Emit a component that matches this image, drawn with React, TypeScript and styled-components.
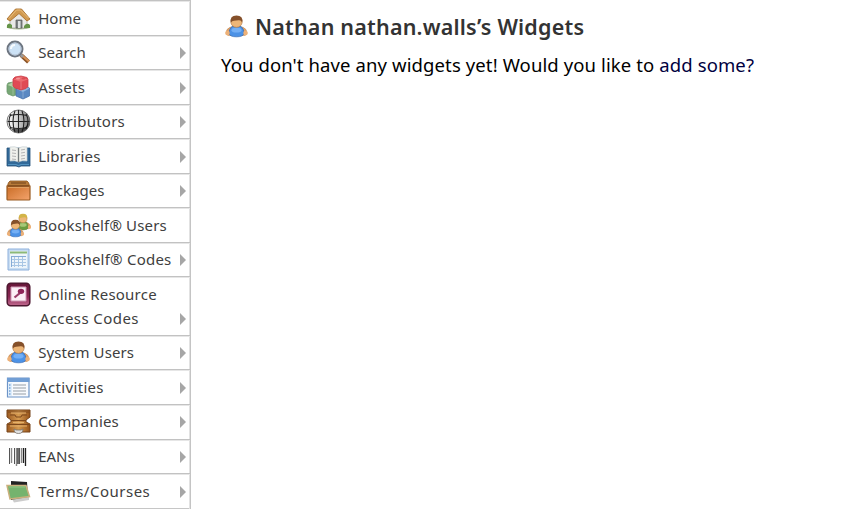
import React from "react";
import styled, { createGlobalStyle } from "styled-components";

const GlobalStyle = createGlobalStyle`
  * { box-sizing: border-box; }
  html, body { margin: 0; background: #fff; }
  body { font-family: "Noto Sans", "Open Sans", sans-serif; overflow: hidden; }
`;

const Page = styled.div`
  display: flex;
  height: 526px;
  background: #fff;
`;

const Sidebar = styled.nav`
  width: 191px;
  flex: none;
`;

const MenuList = styled.ul`
  list-style: none;
  margin: 0;
  padding: 0 0 1px;
  border-right: 1px solid #c4c4c4;
  box-shadow: inset -1px 0 0 #e2e2e2;
  background: linear-gradient(#c6c6c6, #c6c6c6) bottom / 100% 1px no-repeat;
`;

const MenuItem = styled.li<{ $tall?: boolean }>`
  display: flex;
  align-items: flex-start;
  height: ${(p) => (p.$tall ? 58.5 : 34.56)}px;
  padding: 4.5px 4.5px 0 6px;
  border-top: 1px solid #c2c2c2;
  box-shadow: inset 0 1px 0 #e6e6e6;
`;

const IconSlot = styled.span`
  display: block;
  width: 25px;
  height: 25px;
  flex: none;
  svg { display: block; width: 25px; height: 25px; }
`;

const Labels = styled.span`
  display: flex;
  flex-direction: column;
  flex: 1;
  padding-left: 7.2px;
`;

const Label = styled.span<{ $track: number; $indent?: boolean }>`
  font-size: 15px;
  line-height: 24px;
  color: #404040;
  white-space: nowrap;
  letter-spacing: ${(p) => p.$track}px;
  padding-left: ${(p) => (p.$indent ? 1.5 : 0)}px;
`;

const Arrow = styled.span<{ $low?: boolean }>`
  width: 0;
  height: 0;
  flex: none;
  margin-top: ${(p) => (p.$low ? 31 : 7)}px;
  border-left: 6px solid #a6a6a6;
  border-top: 6px solid transparent;
  border-bottom: 6px solid transparent;
`;

const Main = styled.main`
  flex: 1;
  padding: 12px 0 0 30px;
`;

const Heading = styled.h1`
  display: flex;
  align-items: center;
  margin: 0;
  height: 29px;
  padding-left: 3px;
  font-size: 21.5px;
  line-height: 28px;
  font-weight: 600;
  color: #333;
  white-space: nowrap;
`;

const HeadingText = styled.span`
  padding-left: 6px;
  letter-spacing: 0.2px;
`;

const Message = styled.p`
  margin: 10px 0 0;
  font-size: 18.5px;
  line-height: 28px;
  color: #000;
  white-space: nowrap;
  letter-spacing: 0.11px;
`;

const Link = styled.a`
  color: #000040;
  text-decoration: none;
`;

const Svg = ({ children }: { children: React.ReactNode }) => (
  <svg viewBox="0 0 25 25" aria-hidden="true">{children}</svg>
);

const HomeIcon = () => (
  <Svg>
    <ellipse cx="12.5" cy="21" rx="12" ry="2.5" fill="#a9bd90" />
    <path d="M4 12L13 5l8 7v10H4z" fill="#e9e9e7" stroke="#a9a9a5" strokeWidth=".8" />
    <path d="M1 13L9.5 3h6L24 13l-3 2-8-7.5L4 15z" fill="#d19a50" stroke="#a96f2c" strokeWidth=".9" />
    <path d="M3 12.5l7.5-8.500h4l8 8" fill="none" stroke="#e9bd7d" strokeWidth="1" />
    <path d="M10 14h6v8h-6z" fill="#7f8585" stroke="#555" strokeWidth=".7" />
    <path d="M12 15h2.500v7H12z" fill="#dde0e0" />
    <path d="M1 19q2-3 5 0v3H1zM18 20q3-4 6-1v3h-6z" fill="#669549" />
  </Svg>
);

const SearchIcon = () => (
  <Svg>
    <path d="M15 15l7.500 7" stroke="#8a5428" strokeWidth="4.2" />
    <path d="M15 14.500l8 7" stroke="#d99457" strokeWidth="2" />
    <path d="M13 13l4 4" stroke="#9a9a9a" strokeWidth="3" />
    <circle cx="9" cy="9" r="7.5" fill="#cce2f6" stroke="#6d7580" strokeWidth="2" />
    <circle cx="9" cy="9" r="6" fill="none" stroke="#b6c3d4" strokeWidth="1" />
    <path d="M5 9c0-3 2-4 4-4" fill="none" stroke="#f6fbff" strokeWidth="2" />
  </Svg>
);

const AssetsIcon = () => (
  <Svg>
    <path d="M1 10l1-2 5-1 5 3v9l-5 2-5-2-1-2z" fill="#77a775" stroke="#6b976b" strokeWidth=".8" />
    <path d="M1.500 10l5.500 2 5-2-5-3z" fill="#b3d0a5" />
    <path d="M10 14l8-3 5.500 2v8l-6.500 3-7-3z" fill="#5a88c2" stroke="#4a74ac" strokeWidth=".8" />
    <path d="M10.500 14l6.500 3 6.500-3.500-5.500-2z" fill="#91b6df" />
    <path d="M7 4l2-2 6-1 6 1.500 1 2v7l-2 2-5 1.500-6-2-2-2z" fill="#e04a54" stroke="#cc4049" strokeWidth=".8" />
    <path d="M7.500 4.500l7.500 2.500 6.500-2.500-6.500-3z" fill="#ec6c70" />
    <ellipse cx="12" cy="3.500" rx="2" ry="1" fill="#f59698" />
    <ellipse cx="17.500" cy="3.500" rx="2" ry="1" fill="#d94c53" />
    <path d="M15 7v7M17 17v6M7 12v8" stroke="#fff" opacity=".25" />
  </Svg>
);

const GlobeIcon = () => (
  <Svg>
    <defs>
      <linearGradient id="globe"><stop stopColor="#fafafa" /><stop offset=".45" stopColor="#d8d8d8" /><stop offset="1" stopColor="#777" /></linearGradient>
    </defs>
    <circle cx="12.5" cy="12.5" r="11.5" fill="url(#globe)" stroke="#555" strokeWidth=".8" />
    <path d="M4 6.500q8-2 17 0M1.500 12.500h22M4 18.500q8 2 17 0" fill="none" stroke="#222" strokeWidth="1.2" />
    <path d="M12.500 1v23M9 2Q5 12 9 23M16 2q4 10 0 21M5 5Q1 12 5 20M20 5q4 7 0 15" fill="none" stroke="#222" strokeWidth="1.100" />
    <path d="M16 20q5-2 7-7-1 8-7 10-6 2-11-3z" fill="#111" opacity=".65" />
  </Svg>
);

const BookIcon = () => (
  <Svg>
    <path d="M1 4h23v18H15l-2 1-3-1H1z" fill="#326998" stroke="#245079" strokeWidth=".8" />
    <path d="M4 3q5-1 8.500 1Q16 2 21 3v14q-5-1-8.500 1Q9 16 4 17z" fill="#f0f1ed" stroke="#c5d0d4" strokeWidth=".7" />
    <path d="M12.500 4v14" stroke="#747b7c" strokeWidth="1.300" />
    <path d="M6 6l4 .5M6 9l4 .5M6 12l4 .5M6 15l4 .5M15 6l4-.7M15 9l4-.7M15 12l4-.7M15 15l4-.7" stroke="#b5b5b5" strokeWidth="1" />
    <path d="M2 20.500h8l2.500 1 2.500-1h8" fill="none" stroke="#5292c0" strokeWidth="1.200" />
  </Svg>
);

const PackageIcon = () => (
  <Svg>
    <defs><linearGradient id="box" x2="1" y2="1"><stop stopColor="#c96c25" /><stop offset="1" stopColor="#f4a46d" /></linearGradient></defs>
    <path d="M4 3h17q2 1 2.500 5h-22Q2 4 4 3z" fill="#b77a39" stroke="#89531f" strokeWidth=".8" />
    <path d="M1 8h23v13q0 1-1 1H2q-1 0-1-1z" fill="url(#box)" stroke="#9a5a20" strokeWidth="1.200" />
    <path d="M2 8h21M5 5h15" stroke="#70431c" strokeWidth="1.200" />
    <path d="M2 9.500h21" stroke="#dfa062" />
  </Svg>
);

const Person = ({ blond = false }: { blond?: boolean }) => (
  <>
    <path d="M2 20q0-5 4-6.500l6.500-1.500 6.500 1.500q4 1.500 4 6.500l-2 2H4z" fill="#e3a468" stroke="#b98250" strokeWidth=".5" />
    <path d="M5 20q0-5 3-7.500h9q3 2.500 3 7.500-1 3.500-7.500 3.500T5 20z" fill={blond ? "#6b9c40" : "#4c92e6"} stroke={blond ? "#58833a" : "#2d65b3"} strokeWidth=".7" />
    <ellipse cx="12.500" cy="16.500" rx="5" ry="2.500" fill={blond ? "#a6c877" : "#74aff5"} />
    <ellipse cx="12.500" cy="8" rx="5.600" ry="5.500" fill="#edb678" stroke="#b77a42" strokeWidth=".7" />
    <path d="M6.800 8.500Q5.500 1 12.500 1t5.700 7.500Q17 5.500 14.500 6L10 6.500Q8 6.500 6.800 8.500z" fill={blond ? "#d2b448" : "#85502a"} />
    <ellipse cx="3.500" cy="19.500" rx="2.300" ry="2.500" fill="#edb178" />
    <ellipse cx="21.500" cy="19.500" rx="2.300" ry="2.500" fill="#edb178" />
  </>
);

const UserIcon = () => <Svg><g transform="translate(0 .5) scale(1 .95)"><Person /></g></Svg>;

const UsersIcon = () => (
  <Svg>
    <g transform="translate(8 0) scale(.72)"><Person blond /></g>
    <g transform="translate(0 6) scale(.76)"><Person /></g>
  </Svg>
);

const TableIcon = () => (
  <Svg>
    <path d="M2 2h21v21H2z" fill="#c8ddf2" stroke="#8db0dc" strokeWidth="1" />
    <path d="M4 4h17v17H4z" fill="#eef5fb" />
    <path d="M4 4.500h17v2H4z" fill="#8cb978" />
    <path d="M5 9.500h15M5 12.500h15M5 15.500h15M5 18.500h15M8.500 9v11M12.500 9v11M16.500 9v11" stroke="#a9c6e4" strokeWidth="1" />
    <path d="M5 9.500h15M5.500 9v11" stroke="#86abd5" />
  </Svg>
);

const KeyIcon = () => (
  <Svg>
    <defs><linearGradient id="plum" x2="0" y2="1"><stop stopColor="#651638" /><stop offset=".6" stopColor="#8b2754" /><stop offset="1" stopColor="#c16b90" /></linearGradient></defs>
    <rect x="1.200" y="1.200" width="22.600" height="22.600" rx="3.500" fill="url(#plum)" stroke="#4d1730" strokeWidth="1.500" />
    <path d="M5 5h15v14H5z" fill="#fbeff6" stroke="#d198b5" />
    <path d="M8.500 15.500l5.500-4.500" stroke="#9a3c69" strokeWidth="2.200" />
    <ellipse cx="15" cy="9.300" rx="3.200" ry="2.600" fill="#8d2558" />
  </Svg>
);

const ListIcon = () => (
  <Svg>
    <path d="M1.500 3h21.500v19h-21.500z" fill="#f8fafe" stroke="#6d94c7" strokeWidth="1.200" />
    <path d="M1 3h22.500v4H1z" fill="#719ed5" />
    <path d="M2 8h4v13H2z" fill="#deedfc" />
    <path d="M3 10h1.500M3 13h1.500M3 16h1.500M3 19h1.500" stroke="#3e7fc1" strokeWidth="1.200" />
    <path d="M7 10h13M7 13h13M7 16h13M7 19h13" stroke="#969da5" strokeWidth="1.200" />
  </Svg>
);

const CabinetIcon = () => (
  <Svg>
    <defs><linearGradient id="cabinet" x2="1"><stop stopColor="#9c5a20" /><stop offset=".5" stopColor="#d59a50" /><stop offset="1" stopColor="#965319" /></linearGradient></defs>
    <path d="M1 1h23v7l-4 3v2l4 2v8H1v-8l4-2v-2L1 8z" fill="url(#cabinet)" stroke="#77441b" strokeWidth="1" />
    <path d="M2 3h21M4 6h5l1 2h5l1-2h5M5 11.500h15M2 15.500h21" fill="none" stroke="#7d481c" strokeWidth="1" />
    <path d="M5 4h15M7 13.500h11M4 17h17" stroke="#e5b16c" strokeWidth="1" />
    <path d="M8 20q0 4.500 4.500 4.500T17 20l-2 1h-5z" fill="#e2e2e2" stroke="#77716a" strokeWidth=".8" />
  </Svg>
);

const BarcodeIcon = () => (
  <Svg>
    <path d="M3.500 4v16M8.500 4v16M13.500 4v16" stroke="#555" strokeWidth="1" />
    <path d="M5.500 4v15M10.500 4v18M15.500 4v15" stroke="#888" strokeWidth="1.400" />
    <path d="M12 4v16M17.500 4v15M19.500 4v18" stroke="#222" strokeWidth="1.300" />
  </Svg>
);

const BoardIcon = () => (
  <Svg>
    <path d="M5 2l16 1 1 15-17 3z" fill="#222" />
    <path d="M6 20l17-3v4L8 23.500z" fill="#aaa" opacity=".6" />
    <path d="M1 6.500h19l3.500 11L4 20z" fill="#75b36e" stroke="#cbb07d" strokeWidth="1.500" />
    <path d="M3 8h16" stroke="#93c784" strokeWidth="1" />
  </Svg>
);

type Entry = {
  icon: React.ComponentType;
  lines: { text: string; track: number }[];
  arrow?: boolean;
};

const entries: Entry[] = [
  { icon: HomeIcon, lines: [{ text: "Home", track: 0 }] },
  { icon: SearchIcon, lines: [{ text: "Search", track: 0.03 }], arrow: true },
  { icon: AssetsIcon, lines: [{ text: "Assets", track: 0.35 }], arrow: true },
  { icon: GlobeIcon, lines: [{ text: "Distributors", track: 0.25 }], arrow: true },
  { icon: BookIcon, lines: [{ text: "Libraries", track: 0.15 }], arrow: true },
  { icon: PackageIcon, lines: [{ text: "Packages", track: 0.05 }], arrow: true },
  { icon: UsersIcon, lines: [{ text: "Bookshelf® Users", track: 0.15 }] },
  { icon: TableIcon, lines: [{ text: "Bookshelf® Codes", track: 0.23 }], arrow: true },
  { icon: KeyIcon, lines: [{ text: "Online Resource", track: 0.23 }, { text: "Access Codes", track: 0.42 }], arrow: true },
  { icon: UserIcon, lines: [{ text: "System Users", track: 0.08 }], arrow: true },
  { icon: ListIcon, lines: [{ text: "Activities", track: 0.32 }], arrow: true },
  { icon: CabinetIcon, lines: [{ text: "Companies", track: 0.2 }], arrow: true },
  { icon: BarcodeIcon, lines: [{ text: "EANs", track: 0 }], arrow: true },
  { icon: BoardIcon, lines: [{ text: "Terms/Courses", track: 0.5 }], arrow: true },
];

export default function App() {
  return (
    <Page>
      <GlobalStyle />
      <Sidebar>
        <MenuList>
          {entries.map(({ icon: Icon, lines, arrow }) => (
            <MenuItem key={lines[0].text} $tall={lines.length > 1}>
              <IconSlot><Icon /></IconSlot>
              <Labels>
                {lines.map((line, i) => (
                  <Label key={line.text} $track={line.track} $indent={i > 0}>{line.text}</Label>
                ))}
              </Labels>
              {arrow && <Arrow $low={lines.length > 1} />}
            </MenuItem>
          ))}
        </MenuList>
      </Sidebar>
      <Main>
        <Heading>
          <IconSlot><UserIcon /></IconSlot>
          <HeadingText>Nathan nathan.walls’s Widgets</HeadingText>
        </Heading>
        <Message>
          You don't have any widgets yet! Would you like to <Link>add some?</Link>
        </Message>
      </Main>
    </Page>
  );
}
